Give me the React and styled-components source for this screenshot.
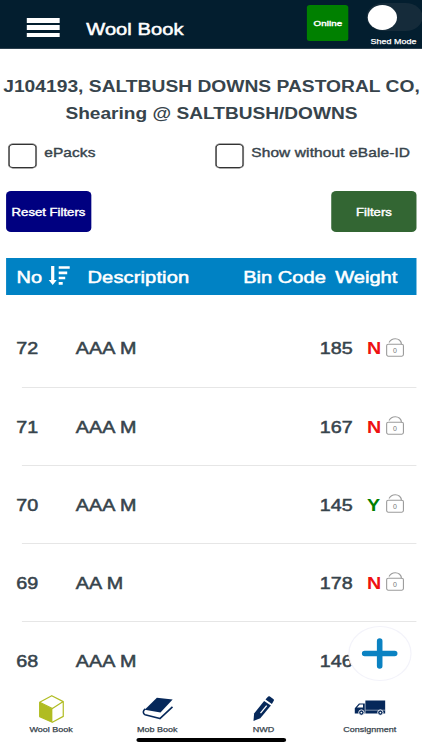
import React from "react";
import styled, { createGlobalStyle } from "styled-components";

/* The screen is laid out narrow and widened horizontally by this factor. */
const STRETCH = 1.2178;
const w = (px) => `${(px / STRETCH).toFixed(2)}px`;

const GlobalStyle = createGlobalStyle`
  * { box-sizing: border-box; }
  html, body { margin: 0; background: #fff; overflow: hidden; }
  body { font-family: "Liberation Sans", Arial, sans-serif; color: #37444c; }
  button { font-family: inherit; border: 0; padding: 0; margin: 0; cursor: pointer; }
`;

const Screen = styled.div`
  position: relative;
  display: flex;
  flex-direction: column;
  width: ${w(423)};
  height: 750px;
  overflow: hidden;
  background: #fff;
  transform: scaleX(${STRETCH});
  transform-origin: 0 0;
`;

const Label = styled.span`
  display: block;
  white-space: nowrap;
  font-size: ${(p) => p.$size}px;
  line-height: ${(p) => p.$line || 20}px;
  font-weight: ${(p) => (p.$bold ? 700 : 400)};
  letter-spacing: ${(p) => p.$track || 0}px;
  -webkit-text-stroke: ${(p) => (p.$bold ? 0 : p.$stroke || 0.5)}px currentColor;
`;

const Glyph = styled.svg`
  display: block;
  flex: none;
  overflow: visible;
`;

const Drawing = ({ width, height, children }) => (
  <Glyph
    viewBox={`0 0 ${width} ${height}`}
    width={(width / STRETCH).toFixed(2)}
    height={height}
    preserveAspectRatio="none"
    fill="none"
  >
    {children}
  </Glyph>
);

const TopBar = styled.header`
  display: flex;
  flex: none;
  height: 49px;
  padding-left: ${w(27.3)};
  background: #031e2f;
  border-bottom: 1px solid #2b3f4d;
  color: #fff;
`;

const MenuButton = styled.button`
  display: flex;
  flex-direction: column;
  justify-content: space-between;
  width: ${w(32.5)};
  height: 19px;
  margin-top: 18px;
  background: none;
`;

const MenuBar = styled.i`
  height: 4.5px;
  width: 100%;
  background: #fff;
`;

const PageTitle = styled.h1`
  margin: 18.5px 0 0 ${w(26.8)};
  width: ${w(223.6)};
  font-weight: 400;
`;

const OnlineBadge = styled.div`
  display: flex;
  align-items: center;
  justify-content: center;
  width: ${w(41.5)};
  height: 36px;
  margin-top: 5px;
  padding-top: 1.5px;
  border-radius: 2.5px;
  background: #008000;
`;

const ShedMode = styled.div`
  display: flex;
  flex-direction: column;
  margin: 3px 0 0 ${w(18.6)};
`;

const Track = styled.div`
  width: ${w(56)};
  height: 28px;
  padding: 1.5px 0 0 0.4px;
  border-radius: 14px;
  background: #152b3a;
`;

const Knob = styled.div`
  width: ${w(30)};
  height: 25.5px;
  border-radius: 50%;
  background: #fff;
`;

const ShedLabel = styled.div`
  padding: 5.5px 0 0 ${w(3.5)};
`;

const JobTitle = styled.h2`
  display: flex;
  flex-direction: column;
  align-items: center;
  flex: none;
  height: 95px;
  margin: 0;
  padding-top: 25px;
`;

const CheckRow = styled.div`
  display: flex;
  flex: none;
  height: 47px;
  padding-left: ${w(9)};
`;

const CheckField = styled.label`
  display: flex;
  gap: ${w(8.3)};
  width: ${w(207.3)};
`;

const CheckBox = styled.span`
  width: ${w(27)};
  height: 23.5px;
  border: 1.5px solid #333;
  border-radius: 3.5px;
  box-shadow: 0 0 0 0.4px #555;
`;

const CheckText = styled.span`
  margin-top: -1px;
`;

const ButtonRow = styled.div`
  display: flex;
  justify-content: space-between;
  flex: none;
  height: 67px;
  padding: 0 ${w(6)} 0 ${w(5.5)};
`;

const ActionButton = styled.button`
  display: flex;
  align-items: center;
  justify-content: center;
  width: ${w(86)};
  height: 40.5px;
  padding-top: 1.5px;
  border-radius: 4px;
  color: #fff;
  background: ${(p) => p.$fill};
`;

const TableHead = styled.div`
  display: grid;
  grid-template-columns: ${w(32)} ${w(39)} ${w(155.7)} ${w(92)} auto;
  align-items: center;
  flex: none;
  height: 36.5px;
  margin: 0 ${w(6)} 0 ${w(5.5)};
  padding: 1px 0 0 ${w(11)};
  background: #0082c4;
  color: #fff;
`;

const SortMark = styled.span`
  padding-bottom: 2px;
`;

const Rows = styled.main`
  flex: 1;
  min-height: 0;
  overflow: hidden;
  padding-top: 15px;
`;

const Row = styled.div`
  display: grid;
  grid-template-columns: ${w(59.5)} ${w(244)} ${w(47.3)} ${w(19)} auto;
  align-items: center;
  height: 78.15px;
  padding: 0 0 0.3px ${w(16.3)};
  background: linear-gradient(#e6e6e6, #e6e6e6) ${w(22.5)} 100% / ${w(394.5)} 1px no-repeat;
`;

const Status = styled.span`
  color: ${(p) => (p.$ok ? "#008000" : "#ee1111")};
`;

const LockSlot = styled.span`
  padding-bottom: 2.5px;
`;

const AddButton = styled.button`
  position: absolute;
  left: ${w(347.8)};
  top: 626px;
  display: flex;
  align-items: center;
  justify-content: center;
  width: ${w(63.5)};
  height: 54.5px;
  border: 1px solid #f3f3fa;
  border-radius: 50%;
  background: #fff;
`;

const TabBar = styled.nav`
  display: flex;
  flex: none;
  height: 62px;
  margin-left: ${w(-2)};
  background: #fff;
`;

const Tab = styled.a`
  display: flex;
  flex-direction: column;
  align-items: center;
  width: ${w(106.4)};
  padding-top: 5px;
`;

const TabIcon = styled.span`
  display: flex;
  align-items: center;
  justify-content: center;
  height: 31px;
  padding: 0 0 1px ${(p) => w(p.$shift || 0)};
`;

const HomeIndicator = styled.div`
  position: absolute;
  left: ${w(136.5)};
  top: 737.5px;
  width: ${w(150)};
  height: 4.5px;
  border-radius: 3px;
  background: #000;
`;

const SortIcon = () => (
  <Drawing width={22} height={19}>
    <path d="M4 0V16" stroke="#fff" strokeWidth="3.2" />
    <path d="M0 14H8L4 19Z" fill="#fff" />
    <path d="M10 1.5H21M10 6.8H18.5M10 12H16.5M10 17.3H14" stroke="#fff" strokeWidth="2.7" />
  </Drawing>
);

const LockIcon = () => (
  <Drawing width={18} height={19}>
    <path d="M3 4.6C4.4 1.9 6.7.7 9.2.7C12.6.7 15.4 3 15.4 6.4" stroke="#9c9c9c" strokeWidth="1.1" />
    <rect x=".6" y="6.2" width="16.8" height="12" rx="1.6" stroke="#9c9c9c" strokeWidth="1.1" />
    <text x="9" y="14.8" fontSize="7" textAnchor="middle" fill="#777">0</text>
  </Drawing>
);

const PlusIcon = () => (
  <Drawing width={36} height={31}>
    <path d="M3 15.5H33M18 3V28" stroke="#0a82c2" strokeWidth="5.6" strokeLinecap="round" />
  </Drawing>
);

const BaleIcon = () => (
  <Drawing width={25} height={28}>
    <path d="M.6 7.2L13.4 14V27.4L.6 21.6Z" fill="#b0bc22" />
    <path d="M.7 7.2L12.8.7L24.3 6.6V21.4L13.4 27.3L.7 21.6ZM.7 7.2L13.4 13.6L24.3 6.6" stroke="#b0bc22" strokeWidth="1.2" strokeLinejoin="round" />
  </Drawing>
);

const BookIcon = () => (
  <Drawing width={31} height={23}>
    <path d="M14.4.8L30.2 2.6L18 15.6L2.2 12.8Z" fill="#06285a" />
    <path d="M2.8 11.8C.2 13.6.2 16.8 2.6 17.8L17.4 21.6L30 9.8" stroke="#06285a" strokeWidth="1.6" strokeLinejoin="round" />
  </Drawing>
);

const PencilIcon = () => (
  <Drawing width={21} height={25}>
    <path d="M10.8 5L17.6 9.6L7 22.2L.2 25L.8 17.4Z" fill="#06285a" />
    <path d="M12.2 3.4L14.4.9C15 .2 15.8.1 16.6.6L20 3C20.8 3.6 20.9 4.4 20.3 5.1L18.6 8Z" fill="#06285a" />
    <path d="M13.4 9.6L7.2 17.2" stroke="#fff" strokeWidth="1.3" />
  </Drawing>
);

const TruckIcon = () => (
  <Drawing width={31} height={16}>
    <path d="M11 .4H30.8V13.4H11ZM.4 13.4V8.2L4.6 3.4H10.4V13.4Z" fill="#06285a" />
    <path d="M2.6 7.6L5.4 4.6H8.6V7.6Z" fill="#fff" />
    <path d="M11 10.2H30.8" stroke="#fff" strokeWidth=".5" />
    <circle cx="7" cy="12.6" r="2.7" fill="#06285a" stroke="#fff" strokeWidth=".9" />
    <circle cx="26" cy="12.6" r="2.7" fill="#06285a" stroke="#fff" strokeWidth=".9" />
    <circle cx="7" cy="12.6" r=".9" fill="#fff" />
    <circle cx="26" cy="12.6" r=".9" fill="#fff" />
  </Drawing>
);

const bales = [
  { no: 72, description: "AAA M", weight: 185, status: "N" },
  { no: 71, description: "AAA M", weight: 167, status: "N" },
  { no: 70, description: "AAA M", weight: 145, status: "Y" },
  { no: 69, description: "AA M", weight: 178, status: "N" },
  { no: 68, description: "AAA M", weight: 146, status: null },
];

const tabs = [
  { name: "Wool Book", Icon: BaleIcon, shift: -1 },
  { name: "Mob Book", Icon: BookIcon },
  { name: "NWD", Icon: PencilIcon, shift: 1 },
  { name: "Consignment", Icon: TruckIcon, shift: 1 },
];

const BaleRow = ({ bale }) => (
  <Row>
    <Label $size={16.2}>{bale.no}</Label>
    <Label $size={16.2} $track={0.1}>{bale.description}</Label>
    <Label $size={16.2}>{bale.weight}</Label>
    {bale.status && (
      <>
        <Status $ok={bale.status === "Y"}>
          <Label $size={16.2} $bold>{bale.status}</Label>
        </Status>
        <LockSlot>
          <LockIcon />
        </LockSlot>
      </>
    )}
  </Row>
);

export default function App() {
  return (
    <>
      <GlobalStyle />
      <Screen>
        <TopBar>
          <MenuButton aria-label="Menu">
            <MenuBar />
            <MenuBar />
            <MenuBar />
          </MenuButton>
          <PageTitle>
            <Label $size={16.5} $track={0.05}>Wool Book</Label>
          </PageTitle>
          <OnlineBadge>
            <Label $size={8} $stroke={0.4} $track={0.05}>Online</Label>
          </OnlineBadge>
          <ShedMode>
            <Track>
              <Knob />
            </Track>
            <ShedLabel>
              <Label $size={7.3} $line={10} $stroke={0.25} $track={0.05}>Shed Mode</Label>
            </ShedLabel>
          </ShedMode>
        </TopBar>

        <JobTitle>
          <Label $size={15.8} $line={26.5} $bold>J104193, SALTBUSH DOWNS PASTORAL CO,</Label>
          <Label $size={15.7} $line={26.5} $bold>Shearing @ SALTBUSH/DOWNS</Label>
        </JobTitle>

        <CheckRow>
          <CheckField>
            <CheckBox />
            <CheckText>
              <Label $size={12.7} $stroke={0.4} $track={0.07}>ePacks</Label>
            </CheckText>
          </CheckField>
          <CheckField>
            <CheckBox />
            <CheckText>
              <Label $size={12.7} $stroke={0.4} $track={0.1}>Show without eBale-ID</Label>
            </CheckText>
          </CheckField>
        </CheckRow>

        <ButtonRow>
          <ActionButton $fill="#000080">
            <Label $size={10.8} $stroke={0.4}>Reset Filters</Label>
          </ActionButton>
          <ActionButton $fill="#336633">
            <Label $size={10.8} $stroke={0.4}>Filters</Label>
          </ActionButton>
        </ButtonRow>

        <TableHead>
          <Label $size={16.4}>No</Label>
          <SortMark>
            <SortIcon />
          </SortMark>
          <Label $size={16.5} $track={0.1}>Description</Label>
          <Label $size={16.5}>Bin Code</Label>
          <Label $size={16.5}>Weight</Label>
        </TableHead>

        <Rows>
          {bales.map((bale) => (
            <BaleRow key={bale.no} bale={bale} />
          ))}
        </Rows>

        <TabBar>
          {tabs.map(({ name, Icon, shift }) => (
            <Tab key={name}>
              <TabIcon $shift={shift}>
                <Icon />
              </TabIcon>
              <Label $size={7.4} $line={12} $stroke={0.25}>{name}</Label>
            </Tab>
          ))}
        </TabBar>

        <AddButton aria-label="Add bale">
          <PlusIcon />
        </AddButton>
        <HomeIndicator />
      </Screen>
    </>
  );
}
